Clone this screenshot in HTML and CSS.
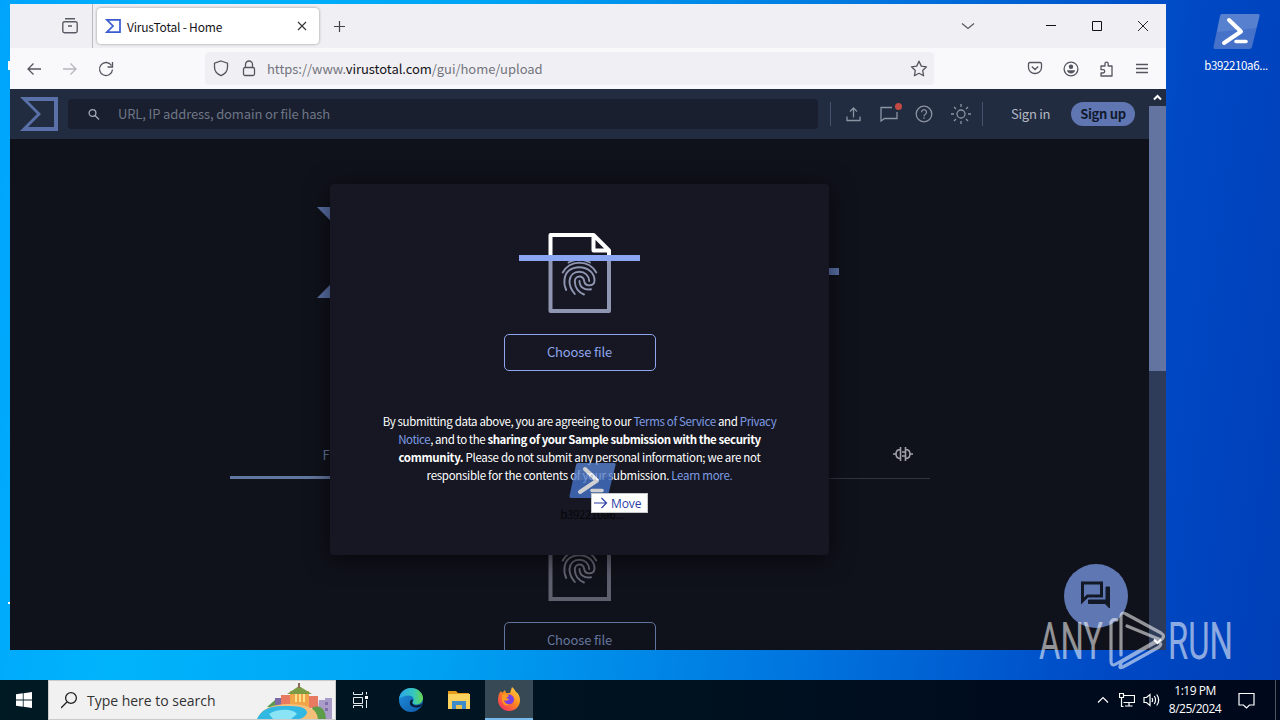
FILE: index.html
```html
<!DOCTYPE html>
<html lang="en">
<head>
    <meta charset="UTF-8">
    <meta name="viewport" content="width=device-width, initial-scale=1.0">
    <title>VirusTotal - Home</title>
    <link rel="stylesheet" href="styles.css">
</head>
<body>
    <!-- Shared shapes -->
    <svg class="defs" width="0" height="0">
        <defs>
            <symbol id="fingerprint" viewBox="0 0 121 80">
                <path d="M49.5 29.5Q60 23.5 71 29.5M43.7 39.5Q49 30 60.3 29.6Q72 30 77.3 39.5M47.2 57C45 52 45 50 45.5 47C46 39 52 34.2 60.3 34.2C69 34.2 75.5 40 75.5 47.5C75.5 53.5 66.5 54 65.3 48.5C64.8 45 63 43.5 60.5 43.5C57.5 43.5 55.8 46 55.8 48.5C56 54.5 59 59 65 61.5M55.8 61C52 56.5 50.3 52.5 50.5 48C51 42 55 38.8 60.3 38.8C66 38.8 70 42.5 70.2 48M60.5 48C60.5 54 65 57.5 72 56.3" fill="none" stroke="currentColor" stroke-width="1.9" stroke-linecap="round"/>
            </symbol>
            <symbol id="powershell" viewBox="0 0 48 36">
                <path d="M9 0h36q2 0 1.5 2l-7.5 31q-.5 2-2.5 2H2q-2 0-1.500-2L7 2q.5-2 2-2z" fill="#4673c9"/>
                <path d="M9 0h36q2 0 1.5 2l-3 12L4 18 7 2q.5-2 2-2z" fill="#6c90d8" opacity=".45"/>
                <path d="M16 6l12 11.5L11 29" fill="none" stroke="#fff" stroke-width="4" stroke-linecap="round" stroke-linejoin="round"/>
                <path d="M23 27.500h10" stroke="#fff" stroke-width="3.6" stroke-linecap="round"/>
            </symbol>
            <symbol id="sigma" viewBox="0 0 38 34">
                <path d="M0 0h38v34H0l17-17zM8 4l13 13L8 30h26V4z" fill="currentColor" fill-rule="evenodd"/>
            </symbol>
        </defs>
    </svg>

    <div class="desktop">
        <!-- Desktop shortcut -->
        <div class="shortcut">
            <svg width="48" height="36"><use href="#powershell"/></svg>
            <span>b392210a6...</span>
        </div>
        <i class="peek peek-top"></i>
        <i class="peek peek-low"></i>

        <div class="browser">
            <div class="tabstrip">
                <div class="tab-history">
                    <svg width="18" height="18" viewBox="0 0 18 18" fill="none" stroke="#5b5b66" stroke-width="1.4"><path d="M4 1.800h10M3.500 4.800h11q1.700 0 1.700 1.700v7.500q0 1.700-1.700 1.700h-11q-1.700 0-1.700-1.700V6.500q0-1.700 1.700-1.700zM7 9h4"/></svg>
                </div>
                <div class="tab">
                    <svg class="favicon" width="16" height="16" viewBox="0 0 16 16"><path d="M1.800 1.800H15v12.400H1.800L8 8z" fill="none" stroke="#3b5bd0" stroke-width="1.7"/></svg>
                    <span class="tab-title">VirusTotal - Home</span>
                    <svg class="tab-close" width="10" height="10" viewBox="0 0 10 10"><path d="M1 1l8 8M9 1L1 9" stroke="#333" stroke-width="1.1"/></svg>
                </div>
                <svg class="tab-new" width="13" height="13" viewBox="0 0 13 13"><path d="M6.500 1v11M1 6.500h11" stroke="#444" stroke-width="1.2"/></svg>
                <div class="window-buttons">
                    <svg width="14" height="14" viewBox="0 0 14 14"><path d="M1 4.500l6 5 6-5" fill="none" stroke="#5b5b66" stroke-width="1.3"/></svg>
                    <svg width="12" height="12" viewBox="0 0 12 12"><path d="M1 5.500h10" stroke="#111"/></svg>
                    <svg width="12" height="12" viewBox="0 0 12 12"><path d="M1.500 1.500h9v9h-9z" fill="none" stroke="#111"/></svg>
                    <svg width="12" height="12" viewBox="0 0 12 12"><path d="M1 1l10 10M11 1L1 11" stroke="#111" stroke-width=".9"/></svg>
                </div>
            </div>

            <div class="toolbar">
                <div class="nav">
                    <svg width="16" height="16" viewBox="0 0 16 16"><path d="M15 8H2M7.500 2.500L2 8l5.500 5.500"/></svg>
                    <svg class="disabled" width="16" height="16" viewBox="0 0 16 16"><path d="M1 8h13M8.500 2.500L14 8l-5.500 5.500"/></svg>
                    <svg width="16" height="16" viewBox="0 0 16 16"><path d="M13.500 4.500A6.500 6.500 0 1 0 14.500 8.500M14.500 1v5H9.500"/></svg>
                </div>
                <div class="urlbar">
                    <svg width="16" height="17" viewBox="0 0 16 17"><path d="M8 1l6.500 2.200V7c0 4-2.500 7-6.500 8.700C4 14 1.500 11 1.500 7V3.200z"/></svg>
                    <svg width="14" height="17" viewBox="0 0 14 17"><rect x="1.500" y="7.500" width="11" height="8" rx="1.500"/><path d="M3.500 7.500V4.500a3.500 3.500 0 0 1 7 0v3"/></svg>
                    <span class="url">https://www.<b>virustotal.com</b>/gui/home/upload</span>
                    <svg class="star" width="18" height="17" viewBox="0 0 18 17"><path d="M9 1.200l2.300 4.900 5.200.7-3.800 3.700.9 5.300L9 13.300l-4.600 2.500.9-5.300L1.500 6.800l5.200-.7z" stroke-linejoin="round"/></svg>
                </div>
                <div class="actions">
                    <svg width="16" height="16" viewBox="0 0 16 16"><path d="M3 1.500h10q1.500 0 1.500 1.500v3.500a6.500 6 0 0 1-13 0V3q0-1.500 1.500-1.500zM4.800 5.500L8 8.500l3.200-3"/></svg>
                    <svg width="16" height="16" viewBox="0 0 16 16"><circle cx="8" cy="8" r="6.900"/><circle cx="8" cy="5.800" r="2.200" fill="#555560" stroke="none"/><path d="M4 9.300h8c0 2-2 3.200-4 3.200S4 11.300 4 9.300z" fill="#555560" stroke="none"/></svg>
                    <svg width="16" height="16" viewBox="0 0 16 16"><path d="M2 5h4V2.700a1.600 1.600 0 0 1 3.200 0V5H13v10H2v-3h2a1.700 1.700 0 0 0 0-3.400H2z" stroke-linejoin="round"/></svg>
                    <svg width="14" height="14" viewBox="0 0 14 14"><path d="M1 2.500h12M1 6.500h12M1 10.500h12"/></svg>
                </div>
            </div>

            <div class="viewport">
                <div class="page">
                    <header class="vt-header">
                        <svg class="vt-logo" width="38" height="34"><use href="#sigma"/></svg>
                        <div class="vt-search">
                            <svg width="12" height="12" viewBox="0 0 12 12"><circle cx="4.500" cy="5" r="3.400"/><path d="M7 7.500l4 4"/></svg>
                            <span>URL, IP address, domain or file hash</span>
                        </div>
                        <div class="vt-tools">
                            <svg width="16" height="16" viewBox="0 0 16 16"><path d="M1 10.500V14.500h13v-4M7.500 11.500V2M4 5.500L7.500 2 11 5.500"/></svg>
                            <div class="messages">
                                <svg width="18" height="16" viewBox="0 0 18 16"><path d="M17 6v6.500H4.500L1 15V1.500h11"/></svg>
                                <i class="dot"></i>
                            </div>
                            <svg width="18" height="18" viewBox="0 0 18 18"><circle cx="9" cy="9" r="7.800"/><path d="M6.500 7.200a2.500 2.500 0 1 1 3.800 2.100q-1.300.8-1.300 2M9 12.300v1.500"/></svg>
                            <svg width="20" height="20" viewBox="0 0 20 20"><circle cx="10" cy="10" r="4"/><path d="M10 0v3M10 17v3M0 10h3M17 10h3M3 3l2 2M15 15l2 2M17 3l-2 2M5 15l-2 2"/></svg>
                        </div>
                        <span class="sign-in">Sign in</span>
                        <span class="sign-up">Sign up</span>
                    </header>

                    <main class="home">
                        <div class="brand">
                            <svg width="104" height="91" viewBox="0 0 104 91"><path d="M0 0h104v91H0l45-45.500zM18 8l37 37.500L18 83h78V8z" fill="#5a70a8" fill-rule="evenodd"/></svg>
                            <i class="brand-end"></i>
                        </div>
                        <div class="tabs">
                            <span class="active">FILE</span>
                            <span class="search-tab">
                                <svg width="20" height="16" viewBox="0 0 20 16"><path d="M0 8h3M17 8h3M7.500 1v14M12.500 1v14M7.500 3.500q-4.500 0-4.500 4.500t4.500 4.500M12.500 3.500q4.500 0 4.500 4.500t-4.500 4.500M9 6h3M9 10h3"/></svg>
                            </span>
                        </div>
                        <div class="upload">
                            <svg class="file-icon" width="121" height="80" viewBox="0 0 121 80">
                                <path d="M31.500 2v76h58.500V18L74 2z" fill="none" stroke="#5e6070" stroke-width="4"/>
                                <use href="#fingerprint"/>
                            </svg>
                            <span class="choose">Choose file</span>
                        </div>
                    </main>

                    <div class="modal">
                        <svg class="file-icon" width="121" height="80" viewBox="0 0 121 80">
                            <path d="M31.500 25v53h58.500V25" fill="none" stroke="#8f96b2" stroke-width="4" stroke-linejoin="round"/>
                            <path d="M31.500 24V2h43L90 17.500V24M74.500 2v15.500H90" fill="none" stroke="#fff" stroke-width="4" stroke-linejoin="round"/>
                            <use href="#fingerprint"/>
                            <path d="M0 22h121v6H0z" fill="#8aa6f3"/>
                        </svg>
                        <span class="choose">Choose file</span>
                        <p class="terms">
                            <span class="l1">By submitting data above, you are agreeing to our <a>Terms of Service</a> and <a>Privacy</a></span><br>
                            <span class="l2"><a>Notice</a>, and to the <b>sharing of your Sample submission with the security</b></span><br>
                            <span class="l3"><b>community.</b> Please do not submit any personal information; we are not</span><br>
                            <span class="l4">responsible for the contents of your submission. <a>Learn more.</a></span>
                        </p>
                    </div>

                    <div class="chat">
                        <svg width="32" height="31" viewBox="0 0 32 31"><path d="M2.500 21V3h19v13H7.500z" fill="none" stroke="#121826" stroke-width="3"/><path d="M29.500 7V28l-4.500-4.500H8.500V20H26V7z" fill="#121826" stroke="#121826" stroke-width="1"/></svg>
                    </div>
                </div>
                <div class="scrollbar">
                    <svg width="17" height="17" viewBox="0 0 17 17"><path d="M5 10.500L8.500 7l3.500 3.500" fill="none" stroke="#fff" stroke-width="2"/></svg>
                    <div class="thumb"></div>
                    <svg width="17" height="17" viewBox="0 0 17 17"><path d="M5 6.500L8.500 10 12 6.500" fill="none" stroke="#fff" stroke-width="2"/></svg>
                </div>
            </div>
        </div>

        <!-- Dragged file -->
        <div class="drag">
            <svg width="48" height="36"><use href="#powershell"/></svg>
            <span class="drag-name">b392210a6...</span>
        </div>
        <div class="drop-tip">
            <svg width="14" height="12" viewBox="0 0 14 12"><path d="M0 6h12M7.500 1l5 5-5 5" fill="none" stroke="#2a3fa8" stroke-width="1.2"/></svg>
            <span>Move</span>
        </div>

        <svg class="watermark" width="200" height="66" viewBox="0 0 200 66">
            <g class="mark-text">
                <text x="2" y="51" textLength="64" lengthAdjust="spacingAndGlyphs">ANY</text>
                <text x="131" y="51" textLength="65" lengthAdjust="spacingAndGlyphs">RUN</text>
            </g>
            <path d="M80 12q-6-2-6 4v37q0 6 5 3l42-24M84 47V9q0-6 5-3l35 19q5 3 0 7L90 18M84 54l37-21q5 3 1 6L86 59q-5 2-2-3M74 14v38" fill="none" stroke="#fff" stroke-width="3.2" stroke-linecap="round" stroke-linejoin="round"/>
        </svg>
    </div>

    <div class="taskbar">
        <div class="start">
            <svg width="16" height="16" viewBox="0 0 16 16" fill="#fff"><path d="M0 2.300L6.800 1.300v6.300H0zM7.600 1.200L16 0v7.600H7.600zM0 8.400h6.800v6.300L0 13.700zM7.600 8.400H16V16l-8.400-1.200z"/></svg>
        </div>
        <div class="search">
            <svg width="18" height="18" viewBox="0 0 18 18"><circle cx="10" cy="7" r="5.400" fill="none" stroke="#222" stroke-width="1.3"/><path d="M6 11L0 17" stroke="#222" stroke-width="1.3"/></svg>
            <span>Type here to search</span>
            <svg class="city" width="78" height="36" viewBox="0 0 78 36">
                <path d="M10 24l8-7 6-1 6 3v6z" fill="#5b9a52"/>
                <path d="M18 15h6v7h-6z" fill="#7a6aa8"/>
                <path d="M62 17h6v-2h7v21H60z" fill="#a99cc9"/>
                <path d="M68 19h3v3h-3zM68 25h3v3h-3z" fill="#7d6fa8"/>
                <path d="M24 12h11v12H24zM52 13h9v12h-9z" fill="#e87a62"/>
                <path d="M33 8h19v18H33z" fill="#f0a548"/>
                <path d="M30 11l12-8 13 8z" fill="#7b9b45"/>
                <path d="M41 0h2v5h-2z" fill="#8b6b55"/>
                <path d="M38 11h2v8h-2zM42 11h2v8h-2zM46 11h2v8h-2z" fill="#fbe08c"/>
                <path d="M56 24q12-3 13 12H50z" fill="#5d9d49"/>
                <path d="M0 36q6-15 32-15 28 0 29 15z" fill="#f4bf78"/>
                <path d="M0 36q6-14 28-13 22-1 22 7-2 5-8 6z" fill="#31b9e3"/>
                <path d="M12 31q8-5 20-4 6 1 8 4l-6 5H16z" fill="#8ae4f5"/>
            </svg>
        </div>
        <div class="apps">
            <div class="app task-view">
                <svg width="17" height="16" viewBox="0 0 17 16" fill="none" stroke="#e8ecef"><path d="M1.500 0v2.500h9V0M1.500 5.500h9v6h-9zM1.500 16v-2.500h9V16M14.500 0v2.500M14.500 8v8"/><path d="M13 4h3v3h-3z" fill="#fff" stroke="none"/></svg>
            </div>
            <div class="app">
                <svg width="24" height="24" viewBox="0 0 24 24">
                    <defs>
                        <linearGradient id="edge-top" x1="0" x2="1"><stop offset="0" stop-color="#2aa5e8"/><stop offset=".6" stop-color="#35c6bf"/><stop offset="1" stop-color="#66d94f"/></linearGradient>
                        <linearGradient id="edge-low" x1="0" x2="1" y2="1"><stop offset="0" stop-color="#1f92de"/><stop offset="1" stop-color="#1057a8"/></linearGradient>
                    </defs>
                    <circle cx="12" cy="12" r="12" fill="url(#edge-low)"/>
                    <path d="M0 11C1 4 6 0 12 0c7 0 12 5 12 10 0 4-3 6.500-7 6.500-3 0-4-1.500-3-3 2-3-1-6-4-6-5 0-8 2-10 3.500z" fill="url(#edge-top)"/>
                    <path d="M13.500 13.500c-1 2 1 4 4 4 2 0 4-.7 5.500-2-1 3-3 4-5.500 4-5 0-8-3-6-7 2-2 3-1 2 1z" fill="#071c33"/>
                </svg>
            </div>
            <div class="app">
                <svg width="22" height="18" viewBox="0 0 22 18"><path d="M0 0h8l2 2h11v5H0z" fill="#e69a1c"/><path d="M0 3h22v15H0z" fill="#fbd25d"/><path d="M4 18v-8h14v8h-4v-4H8v4z" fill="#3d8bc9"/><path d="M8 14h6v4H8z" fill="#e9c254"/></svg>
            </div>
            <div class="app current">
                <svg width="24" height="24" viewBox="0 0 24 24">
                    <defs><linearGradient id="fox" x1="1" y1="0" x2=".2" y2="1"><stop offset="0" stop-color="#ffe14a"/><stop offset=".5" stop-color="#ff8a1f"/><stop offset="1" stop-color="#f5305f"/></linearGradient></defs>
                    <path d="M4 4l1 2 3-3 1 3 4 0 2-6c2 2 3 3 4 5 2 1 4 4 4 8 0 7-5 11-11 11S1 19 1 13c0-4 1-7 3-9z" fill="url(#fox)"/>
                    <circle cx="12" cy="12.500" r="5" fill="#7a3fe0"/>
                    <path d="M5 8c2-1 5-1 7 1l-3 2 3 1c-1 2-4 2-5 1 0 3 3 5 6 4-5 4-9-1-8-9z" fill="#ff9a22"/>
                </svg>
            </div>
        </div>
        <div class="tray">
            <svg width="12" height="8" viewBox="0 0 12 8"><path d="M1 6.500L6 1.500l5 5"/></svg>
            <svg width="16" height="14" viewBox="0 0 16 14"><path d="M5 2.500h10.500v7H4.500M.5.500h4v4h-4zM2.500 4.500v9h2M10 9.500v3.500M6 13h7.500"/></svg>
            <svg width="17" height="14" viewBox="0 0 17 14"><path d="M1 4.500h2.500L7 1.500v11l-3.500-3H1zM9 5q1.200 2 0 4M11.300 3q2.500 4 0 8M13.700 1.500q4 5.500 0 11"/></svg>
            <div class="clock"><span>1:19 PM</span><span>8/25/2024</span></div>
            <svg width="17" height="17" viewBox="0 0 17 17"><path d="M1 1.500h15v11.500h-4.500L8.500 16l-3-3H1z"/></svg>
            <i class="show-desktop"></i>
        </div>
    </div>
</body>
</html>
```
FILE: styles.css
```css
* {
    box-sizing: border-box;
}

body {
    margin: 0;
    width: 1280px;
    height: 720px;
    overflow: hidden;
    font-family: "Noto Sans CJK SC", "Open Sans", sans-serif;
    font-size: 13px;
}

svg {
    display: block;
    flex: none;
}

.defs {
    position: absolute;
}

/* Desktop */
.desktop {
    position: relative;
    height: 680px;
    padding: 4px 0 0 10px;
    background: linear-gradient(97deg, #00a4fc 0%, #00b4fb 14%, #00a4f4 36%, #0074de 65%, #0048c4 88%, #003fb8 100%);
}

.shortcut, .drag {
    position: absolute;
    display: flex;
    flex-direction: column;
    align-items: center;
    width: 76px;
    font-size: 11.5px;
    line-height: 16px;
    letter-spacing: -0.35px;
    color: white;
}

.shortcut {
    left: 1199px;
    top: 14px;
}

.shortcut span {
    margin: 7px 2px 0 0;
}

.peek {
    position: absolute;
    left: 8px;
    width: 2px;
    background: white;
}

.peek-top {
    top: 61px;
    height: 9px;
}

.peek-low {
    top: 602px;
    height: 2px;
}

/* Browser window */
.browser {
    width: 1156px;
    height: 646px;
    display: flex;
    flex-direction: column;
    background: #f9f9fb;
}

.tabstrip {
    height: 44px;
    display: flex;
    align-items: center;
    background: #f0f0f4;
}

.tab-history {
    width: 83px;
    height: 44px;
    padding: 13px 0 0 51px;
    border-right: 1px solid #b9b9c0;
}

.tab {
    width: 222px;
    height: 36px;
    margin-left: 4px;
    padding: 0 12px 0 8px;
    display: flex;
    align-items: center;
    background: white;
    border-radius: 4px;
    box-shadow: 0 0 3px rgba(0, 0, 0, 0.4);
}

.tab-title {
    margin-left: 6px;
    font-size: 12px;
    letter-spacing: -0.2px;
    color: #15141a;
}

.tab-close {
    margin-left: auto;
}

.tab-new {
    margin-left: 14px;
}

.window-buttons {
    margin-left: auto;
    display: flex;
    align-items: center;
    gap: 34px;
    padding-right: 17px;
}

.window-buttons svg:first-child {
    margin-right: 36px;
}

.toolbar {
    height: 41px;
    display: flex;
    align-items: center;
    padding: 0 17px 0 16px;
}

.toolbar svg {
    fill: none;
    stroke: #555560;
    stroke-width: 1.3;
}

.nav {
    display: flex;
    gap: 20px;
}

.nav .disabled {
    opacity: 0.4;
}

.urlbar {
    width: 729px;
    height: 33px;
    margin-left: 91px;
    padding: 0 6px 0 8px;
    display: flex;
    align-items: center;
    gap: 13px;
    background: #f0f0f4;
    border-radius: 4px;
}

.url {
    margin-left: -2px;
    font-size: 13px;
    letter-spacing: -0.04px;
    color: #74747d;
}

.url b {
    font-weight: normal;
    color: #15141a;
}

.star {
    margin-left: auto;
}

.actions {
    margin-left: auto;
    display: flex;
    align-items: center;
    gap: 20px;
}

/* Page */
.viewport {
    flex: 1;
    display: flex;
    min-height: 0;
}

.page {
    position: relative;
    width: 1139px;
    overflow: hidden;
    background: #10121b;
}

.vt-header {
    height: 50px;
    display: flex;
    align-items: center;
    padding-left: 10px;
    background: #212c40;
}

.vt-logo {
    color: #5a70a8;
}

.vt-search {
    width: 750px;
    height: 30px;
    margin-left: 10px;
    padding-left: 20px;
    display: flex;
    align-items: center;
    gap: 18px;
    background: #191f2f;
    border-radius: 4px;
    color: #6f7686;
    letter-spacing: -0.13px;
}

.vt-search span {
    margin-top: -1px;
}

.vt-search svg {
    fill: none;
    stroke: #a5abb8;
    stroke-width: 1.3;
}

.vt-tools {
    width: 153px;
    height: 24px;
    margin-left: 12px;
    padding-left: 15px;
    display: flex;
    align-items: center;
    gap: 17.5px;
    border-left: 1px solid #46536c;
    border-right: 1px solid #46536c;
}

.vt-tools svg {
    fill: none;
    stroke: #8c93a1;
    stroke-width: 1.3;
}

.messages {
    position: relative;
}

.dot {
    position: absolute;
    top: -3px;
    right: -4px;
    width: 7px;
    height: 7px;
    border-radius: 50%;
    background: #c14b42;
}

.sign-in {
    width: 39px;
    margin: -1px 0 0 28px;
    letter-spacing: -0.25px;
    white-space: nowrap;
    color: #b4b8c2;
}

.sign-up {
    width: 64px;
    height: 24px;
    margin-left: 21px;
    line-height: 23px;
    text-align: center;
    font-weight: bold;
    letter-spacing: -0.3px;
    color: #111a2e;
    background: #5f76b2;
    border-radius: 12px;
}

.home {
    display: flex;
    flex-direction: column;
    align-items: center;
}

.brand {
    width: 522px;
    height: 91px;
    margin: 68px 3px 0 0;
    display: flex;
    justify-content: space-between;
    align-items: center;
}

.brand-end {
    width: 40px;
    height: 7px;
    margin-top: 38px;
    background: #5a70a8;
}

.tabs {
    width: 700px;
    height: 48px;
    margin-top: 133px;
    display: flex;
    border-bottom: 1px solid #30343f;
}

.tabs .active {
    width: 233px;
    height: 48px;
    padding-left: 93px;
    line-height: 47px;
    letter-spacing: 1.5px;
    color: #66769c;
    border-bottom: 3px solid #62779f;
}

.search-tab {
    margin-left: auto;
    padding: 15px 17px 0 0;
}

.search-tab svg {
    fill: none;
    stroke: #a0a1aa;
    stroke-width: 1.6;
}

.upload {
    margin-top: 42px;
    display: flex;
    flex-direction: column;
    align-items: center;
}

.file-icon {
    color: #8f96b2;
}

.choose {
    width: 152px;
    height: 37px;
    margin-top: 21px;
    line-height: 34px;
    text-align: center;
    letter-spacing: -0.15px;
    color: #8ea6ee;
    border: 1px solid #8ea6ee;
    border-radius: 5px;
}

.upload .file-icon {
    color: #656776;
}

.upload .choose {
    color: #66769f;
    border-color: #62759f;
}

.modal {
    position: absolute;
    left: 320px;
    top: 95px;
    width: 499px;
    height: 371px;
    padding-top: 49px;
    display: flex;
    flex-direction: column;
    align-items: center;
    background: #161722;
    border-radius: 4px;
    box-shadow: 0 4px 24px rgba(0, 0, 0, 0.6);
}

.terms {
    margin: 41px 0 0;
    text-align: center;
    white-space: nowrap;
    font-size: 11.5px;
    line-height: 18px;
    letter-spacing: -0.3px;
    color: white;
}

.terms .l1 {
    letter-spacing: -0.35px;
}

.terms .l2 {
    letter-spacing: -0.44px;
}

.terms a {
    color: #7f9ce4;
}

.chat {
    position: absolute;
    left: 1054px;
    top: 475px;
    width: 64px;
    height: 64px;
    padding: 16px;
    background: #5f77b3;
    border-radius: 50%;
}

.scrollbar {
    width: 17px;
    display: flex;
    flex-direction: column;
    background: #2e3c59;
}

.scrollbar svg:first-child {
    background: #212c40;
}

.scrollbar svg:last-child {
    margin-top: auto;
}

.thumb {
    height: 265px;
    background: #62749f;
}

/* Drag and drop */
.drag {
    left: 555px;
    top: 463px;
}

.drag svg {
    opacity: 0.8;
}

.drag-name {
    margin: 7px 2px 0 0;
    color: #05060a;
}

.drop-tip {
    position: absolute;
    left: 591px;
    top: 493px;
    width: 57px;
    height: 20px;
    padding-left: 2px;
    display: flex;
    align-items: center;
    gap: 3px;
    font-family: "Open Sans", sans-serif;
    font-size: 12px;
    letter-spacing: -0.1px;
    color: #2a3fa8;
    background: white;
    border: 1px solid #c8c8c8;
}

.watermark {
    position: absolute;
    left: 1037px;
    top: 608px;
    opacity: 0.55;
}

.mark-text {
    font-family: Roboto, sans-serif;
    font-size: 52px;
    fill: white;
}

/* Taskbar */
.taskbar {
    height: 40px;
    display: flex;
    background: linear-gradient(90deg, #001a24, #00101f 60%, #00081c);
    font-family: "Open Sans", "Noto Sans", sans-serif;
}

.start {
    width: 48px;
    padding: 12px 16px;
}

.search {
    width: 288px;
    display: flex;
    align-items: center;
    padding-left: 12px;
    background: #f1f1f2;
    border: 1px solid #c9cbcd;
    color: #333;
    font-size: 14px;
}

.search span {
    margin-left: 8px;
    letter-spacing: -0.02px;
}

.city {
    margin: 2px 0 0 auto;
}

.apps {
    display: flex;
}

.app {
    width: 48px;
    display: flex;
    align-items: center;
    justify-content: center;
}

.app.task-view {
    margin-right: 3px;
}

.app.current {
    margin-left: 2px;
    background: #364954;
    border-bottom: 2px solid #76b9ed;
}

.tray {
    margin-left: auto;
    display: flex;
    align-items: center;
}

.tray svg {
    fill: none;
    stroke: white;
    stroke-width: 1.2;
    margin-right: 10px;
}

.tray svg:nth-of-type(2) {
    margin-right: 8px;
}

.tray svg:nth-of-type(3) {
    margin-right: 8px;
}

.clock {
    width: 54px;
    margin-right: 16px;
    display: flex;
    flex-direction: column;
    align-items: center;
    font-size: 12px;
    line-height: 18px;
    letter-spacing: -0.5px;
    color: white;
    white-space: nowrap;
}

.tray .show-desktop {
    width: 1px;
    height: 40px;
    margin: 0 4px 0 10px;
    background: #4b5560;
}
```
